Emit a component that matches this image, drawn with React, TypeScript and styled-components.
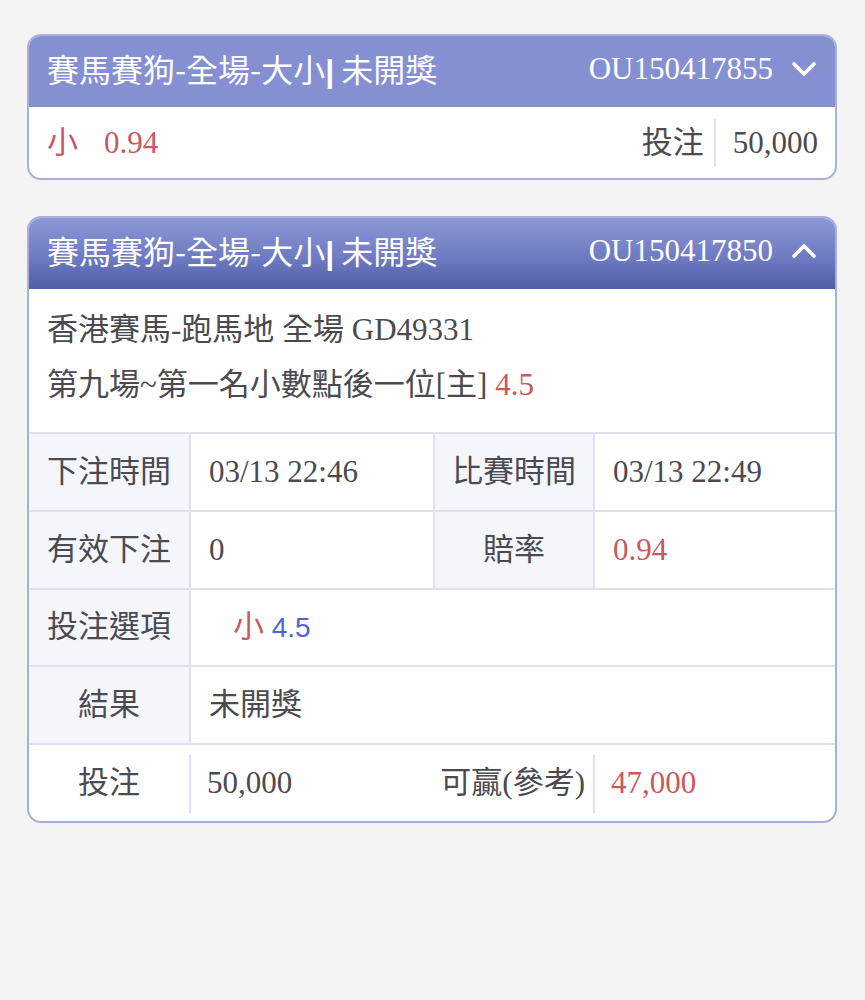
import React from "react"
import styled, { createGlobalStyle } from "styled-components"

const GlobalStyle = createGlobalStyle`
  html, body {
    margin: 0;
    padding: 0;
    background: #f4f4f5;
  }
  body {
    font-family: "Liberation Serif", "Noto Sans CJK TC", serif;
    color: #4a4a50;
  }
`

const RED = "#c95760"
const BLUE = "#4e64dc"

interface Ticket {
  title: string
  status: string
  orderNo: string
  open: boolean
}

function Chevron({ up }: { up: boolean }) {
  return (
    <svg width="26" height="16" viewBox="0 0 26 16" fill="none">
      <polyline
        points={up ? "3,13 13,3 23,13" : "3,3 13,13 23,3"}
        stroke="#fff"
        strokeWidth="3.6"
        strokeLinecap="round"
        strokeLinejoin="round"
      />
    </svg>
  )
}

function CardHeader({ title, status, orderNo, open }: Ticket) {
  return (
    <Header $open={open}>
      <Title>
        {title}
        <Bar>|</Bar> {status}
      </Title>
      <OrderNo>
        {orderNo}
        <Chevron up={open} />
      </OrderNo>
    </Header>
  )
}

function App() {
  return (
    <Page>
      <GlobalStyle />
      <Card>
        <CardHeader title="賽馬賽狗-全場-大小" status="未開獎" orderNo="OU150417855" open={false} />
        <Summary>
          <Pick>
            <span>小</span>
            <span>0.94</span>
          </Pick>
          <Stake>
            <span className="label">投注</span>
            <span className="amount">50,000</span>
          </Stake>
        </Summary>
      </Card>

      <Card>
        <CardHeader title="賽馬賽狗-全場-大小" status="未開獎" orderNo="OU150417850" open={true} />
        <Info>
          <div>香港賽馬-跑馬地 全場 GD49331</div>
          <div>
            第九場~第一名小數點後一位[主] <Red>4.5</Red>
          </div>
        </Info>
        <Table>
          <Cell $label $first>下注時間</Cell>
          <Cell>03/13 22:46</Cell>
          <Cell $label>比賽時間</Cell>
          <Cell>03/13 22:49</Cell>

          <Cell $label $first>有效下注</Cell>
          <Cell>0</Cell>
          <Cell $label>賠率</Cell>
          <Cell><Red>0.94</Red></Cell>

          <Cell $label $first>投注選項</Cell>
          <Cell $span={3}>
            <Option>
              <Red>小</Red> <Blue>4.5</Blue>
            </Option>
          </Cell>

          <Cell $label $first>結果</Cell>
          <Cell $span={3}>未開獎</Cell>

          <FootCell $center>投注</FootCell>
          <FootCell $divider>50,000</FootCell>
          <FootCell $right>可贏(參考)</FootCell>
          <FootCell $divider><Red>47,000</Red></FootCell>
        </Table>
      </Card>
    </Page>
  )
}

const Page = styled.div`
  padding: 34px 28px 40px 27px;
  display: flex;
  flex-direction: column;
  gap: 36px;
`

const Card = styled.div`
  border: 2px solid #a8afda;
  border-radius: 14px;
  background: #fff;
  overflow: hidden;
`

const Header = styled.div<{ $open: boolean }>`
  height: 71px;
  box-sizing: border-box;
  padding: 0 18px 5px;
  display: flex;
  align-items: center;
  justify-content: space-between;
  color: #fff;
  background: ${({ $open }) =>
    $open ? "linear-gradient(180deg, #8c97d7 0%, #6f7bc2 55%, #505ea8 100%)" : "#8490d2"};
`

const Title = styled.div`
  font-family: "Noto Sans CJK TC", "Liberation Sans", sans-serif;
  font-size: 32px;
  line-height: 40px;
  white-space: nowrap;
`

const Bar = styled.span`
  font-family: "Liberation Sans", sans-serif;
  font-weight: 700;
`

const OrderNo = styled.div`
  display: flex;
  align-items: center;
  gap: 18px;
  font-size: 31px;
  line-height: 40px;
`

const Summary = styled.div`
  height: 71px;
  display: flex;
  align-items: center;
  justify-content: space-between;
  padding: 0 17px 0 18px;
  font-size: 31px;
  line-height: 40px;
`

const Pick = styled.div`
  display: flex;
  align-items: baseline;
  gap: 26px;
  color: ${RED};
`

const Stake = styled.div`
  display: flex;
  align-items: center;
  .label {
    padding-right: 10px;
    border-right: 2px solid #dfe1f1;
    line-height: 48px;
  }
  .amount {
    padding-left: 17px;
  }
`

const Info = styled.div`
  padding: 13px 18px 20px;
  font-size: 31px;
  line-height: 55px;
`

const Red = styled.span`
  color: ${RED};
`

const Blue = styled.span`
  color: ${BLUE};
  font-family: "Liberation Sans", sans-serif;
  font-size: 28px;
`

const Option = styled.span`
  padding-left: 24px;
`

const Table = styled.div`
  display: grid;
  grid-template-columns: 160px 244px 160px 1fr;
  grid-auto-rows: 77.8px;
  font-size: 31px;
  line-height: 40px;
`

const Cell = styled.div<{ $label?: boolean; $span?: number; $first?: boolean }>`
  display: flex;
  align-items: center;
  justify-content: ${({ $label }) => ($label ? "center" : "flex-start")};
  padding: ${({ $label }) => ($label ? "0" : "0 18px")};
  grid-column: ${({ $span }) => ($span ? `span ${$span}` : "auto")};
  background: ${({ $label }) => ($label ? "#f5f6fb" : "#fff")};
  border-top: 2px solid #dfe1f1;
  border-left: ${({ $first }) => ($first ? "none" : "2px solid #dfe1f1")};
  white-space: nowrap;
`

const FootCell = styled.div<{ $center?: boolean; $right?: boolean; $divider?: boolean }>`
  position: relative;
  display: flex;
  align-items: center;
  justify-content: ${({ $center, $right }) => ($center ? "center" : $right ? "flex-end" : "flex-start")};
  padding: ${({ $center, $right }) => ($center ? "0" : $right ? "0 8px 0 0" : "0 18px")};
  border-top: 2px solid #dfe1f1;
  white-space: nowrap;
  ${({ $divider }) =>
    $divider &&
    `&::before {
      content: "";
      position: absolute;
      left: 0;
      top: 10px;
      bottom: 8px;
      width: 2px;
      background: #dfe1f1;
    }`}
`

export default App
